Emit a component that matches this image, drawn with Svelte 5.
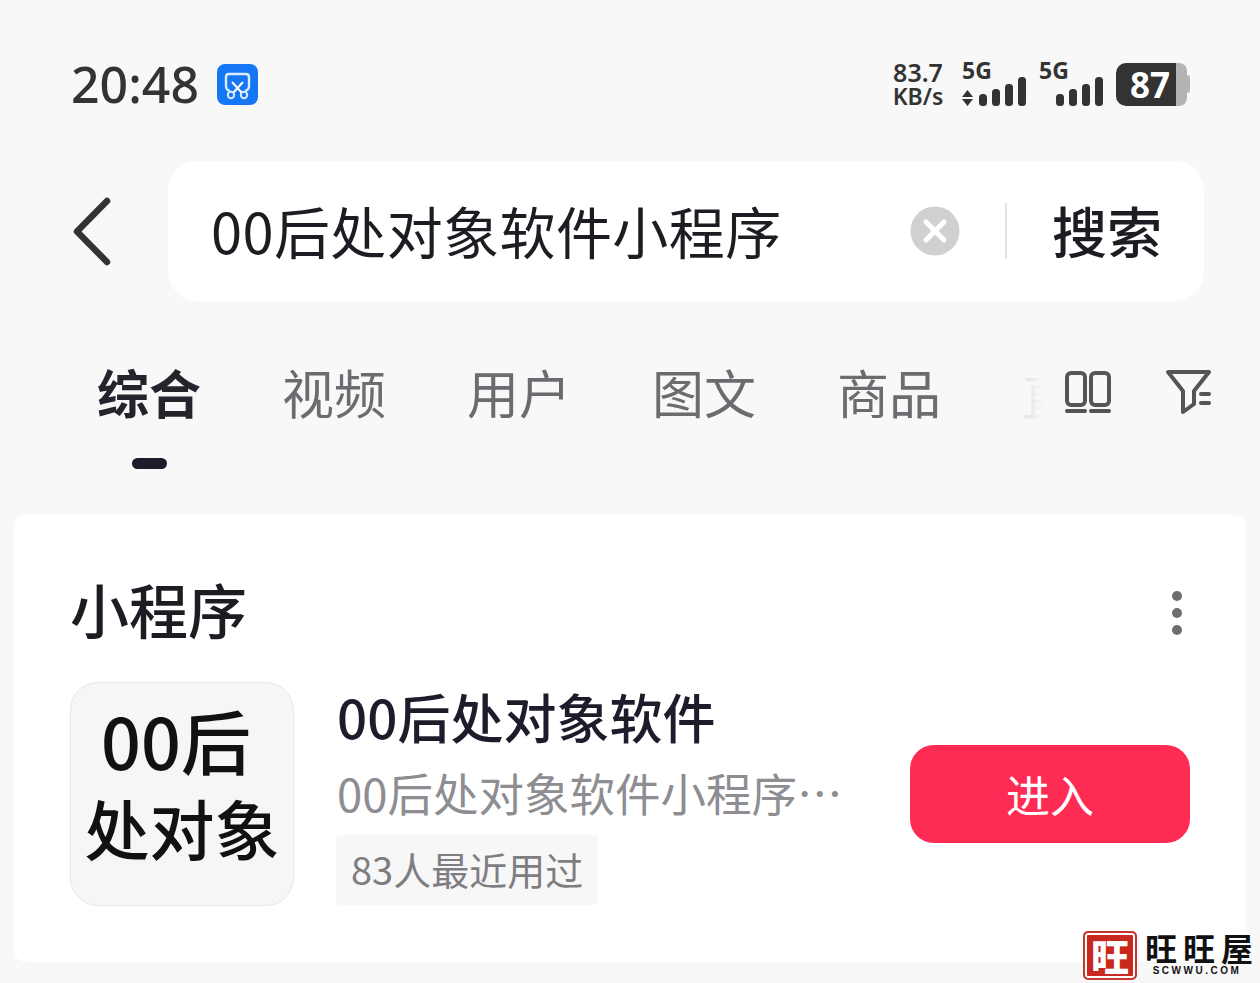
<script>
  const tabs = ["视频", "用户", "图文", "商品"];
</script>

<div class="page">
  <div class="status">
    <div class="left">
      <span class="time">20:48</span>
      <span class="shot">
        <svg width="41" height="41" viewBox="0 0 41 41">
          <rect width="41" height="41" rx="8" fill="#1677f5" />
          <path d="M13 27 Q9 26 9 22 V13 Q9 10 12 10 H29 Q32 10 32 13 V22 Q32 26 28 27" fill="none" stroke="#dcebff" stroke-width="2.4" />
          <path d="M15 18 L25 29 M26 18 L16 29" stroke="#fff" stroke-width="2" fill="none" />
          <circle cx="14" cy="31" r="3.2" fill="none" stroke="#dcebff" stroke-width="2" />
          <circle cx="27" cy="31" r="3.2" fill="none" stroke="#dcebff" stroke-width="2" />
        </svg>
      </span>
    </div>
    <div class="right">
      <div class="speed"><span>83.7</span><span class="unit">KB/s</span></div>
      <div class="sim first">
        <span class="gen">5G</span>
        <svg width="65" height="30" viewBox="0 0 65 30">
          <path d="M0 20 L5.500 13 L11 20 Z M0 22 H11 L5.500 29 Z" fill="#333" />
          <rect x="17" y="17" width="8" height="12" rx="3.500" fill="#333" />
          <rect x="30" y="12" width="8" height="17" rx="3.500" fill="#333" />
          <rect x="43" y="7" width="8" height="22" rx="3.500" fill="#333" />
          <rect x="56" y="0" width="8" height="29" rx="3.500" fill="#333" />
        </svg>
      </div>
      <div class="sim second">
        <span class="gen">5G</span>
        <svg width="48" height="30" viewBox="0 0 48 30">
          <rect x="0" y="17" width="8" height="12" rx="3.500" fill="#333" />
          <rect x="13" y="12" width="8" height="17" rx="3.500" fill="#333" />
          <rect x="26" y="7" width="8" height="22" rx="3.500" fill="#333" />
          <rect x="39" y="0" width="8" height="29" rx="3.500" fill="#333" />
        </svg>
      </div>
      <div class="battery">
        <span class="level">87</span>
        <span class="rest"></span>
        <span class="nub"></span>
      </div>
    </div>
  </div>

  <div class="search-row">
    <svg class="back" width="39" height="69" viewBox="0 0 39 69">
      <path d="M34 4 L4 34.500 L34 65" fill="none" stroke="#333" stroke-width="6.500" stroke-linecap="round" stroke-linejoin="round" />
    </svg>
    <div class="search">
      <span class="query">00后处对象软件小程序</span>
      <svg class="clear" width="50" height="50" viewBox="0 0 50 50">
        <circle cx="25" cy="25" r="24.500" fill="#d0d0d2" />
        <path d="M16 16 L34 34 M34 16 L16 34" stroke="#fff" stroke-width="5" stroke-linecap="round" />
      </svg>
      <span class="divider"></span>
      <span class="go">搜索</span>
    </div>
  </div>

  <div class="tabs">
    <div class="tab active">
      <span>综合</span>
      <i></i>
    </div>
    {#each tabs as t}
      <div class="tab"><span>{t}</span></div>
    {/each}
    <div class="fade">直</div>
    <svg class="cols" width="46" height="42" viewBox="0 0 46 42">
      <rect x="2" y="2" width="18" height="32" rx="4" fill="none" stroke="#555" stroke-width="4" />
      <rect x="26" y="2" width="18" height="32" rx="4" fill="none" stroke="#555" stroke-width="4" />
      <path d="M2 40 H20 M26 40 H44" stroke="#555" stroke-width="4" stroke-linecap="round" />
    </svg>
    <svg class="filter" width="48" height="48" viewBox="0 0 48 48">
      <path d="M3 3 H44 L29 22 V35 L18 43 V22 Z" fill="none" stroke="#555" stroke-width="4" stroke-linejoin="round" />
      <path d="M36 25 H44 M36 34 H44" stroke="#555" stroke-width="4" stroke-linecap="round" />
    </svg>
  </div>

  <div class="card">
    <div class="card-head">
      <span class="title">小程序</span>
      <div class="more"><i></i><i></i><i></i></div>
    </div>
    <div class="item">
      <div class="logo">
        <span class="l1">00后</span>
        <span class="l2">处对象</span>
      </div>
      <div class="info">
        <div class="name">00后处对象软件</div>
        <div class="desc">00后处对象软件小程序…</div>
        <div class="tag">83人最近用过</div>
      </div>
      <button class="enter">进入</button>
    </div>
  </div>

  <div class="mark">
    <span class="seal">旺</span>
    <div class="mark-text">
      <span class="cn">旺旺屋</span>
      <span class="en">SCWWU.COM</span>
    </div>
  </div>
</div>

<style>
  :global(body) {
    margin: 0;
    background: #f8f8f9;
  }
  .page {
    position: relative;
    height: 983px;
    overflow: hidden;
    background: #f8f8f9;
    font-family: "Noto Sans CJK SC", "Noto Sans", sans-serif;
  }
  .status {
    display: flex;
    justify-content: space-between;
    align-items: center;
    height: 60px;
    padding: 54px 70px 0 71px;
  }
  .left {
    display: flex;
    align-items: center;
    gap: 18px;
  }
  .time {
    font-family: "Noto Sans", sans-serif;
    font-size: 50px;
    font-weight: 500;
    color: #333;
    line-height: 60px;
  }
  .shot {
    display: flex;
  }
  .right {
    display: flex;
    align-items: center;
    color: #333;
    font-family: "Noto Sans", sans-serif;
    font-weight: 700;
  }
  .speed {
    display: flex;
    flex-direction: column;
    font-size: 25px;
    line-height: 24px;
    font-weight: 600;
    width: 50px;
    align-items: center;
    margin-right: 19px;
  }
  .unit {
    font-size: 23px;
  }
  .sim {
    position: relative;
    height: 46px;
    display: flex;
    align-items: flex-end;
  }
  .second {
    margin-left: 12px;
    padding-left: 17px;
    margin-right: 12px;
  }
  .gen {
    position: absolute;
    left: 0;
    top: -3px;
    font-size: 23px;
    line-height: 24px;
  }
  .battery {
    display: flex;
    align-items: center;
    height: 43px;
    width: 74px;
  }
  .level {
    width: 60px;
    height: 43px;
    box-sizing: border-box;
    padding-left: 8px;
    background: #333;
    border-radius: 10px 0 0 10px;
    color: #fff;
    font-size: 35px;
    line-height: 43px;
    text-align: center;
  }
  .rest {
    width: 11px;
    height: 43px;
    background: #b4b4b4;
    border-radius: 0 8px 8px 0;
  }
  .nub {
    width: 3px;
    height: 18px;
    background: #b4b4b4;
    border-radius: 0 3px 3px 0;
  }
  .search-row {
    display: flex;
    align-items: center;
    margin-top: 47px;
    padding: 0 56px 0 73px;
  }
  .back {
    margin-right: 56px;
  }
  .search {
    flex: 1;
    height: 140px;
    display: flex;
    align-items: center;
    background: #fff;
    border-radius: 30px;
    padding-left: 43px;
    color: #1c1c22;
  }
  .query {
    flex: 1;
    font-size: 56px;
    letter-spacing: 0.4px;
    line-height: 137px;
    height: 140px;
  }
  .clear {
    margin-right: 45px;
  }
  .divider {
    width: 2px;
    height: 56px;
    background: #e3e3e3;
    margin-right: 45px;
  }
  .go {
    font-size: 55px;
    font-weight: 500;
    margin-right: 44px;
    width: 108px;
    line-height: 137px;
    height: 140px;
    white-space: nowrap;
  }
  .tabs {
    position: relative;
    display: flex;
    align-items: flex-start;
    margin-top: 60px;
    padding-left: 97px;
    height: 154px;
    gap: 81px;
  }
  .tab {
    display: flex;
    flex-direction: column;
    align-items: center;
    font-size: 52px;
    line-height: 62px;
    color: #6b6b70;
    width: 104px;
    white-space: nowrap;
  }
  .active {
    color: #24242c;
    font-weight: 700;
  }
  .active i {
    display: block;
    width: 35px;
    height: 11px;
    margin-top: 35px;
    border-radius: 6px;
    background: #1c1c2b;
  }
  .fade {
    position: absolute;
    left: 1022px;
    top: 2px;
    width: 40px;
    overflow: hidden;
    font-size: 50px;
    line-height: 62px;
    color: #d8d8da;
    white-space: nowrap;
    mask-image: linear-gradient(to right, rgba(0, 0, 0, 0.7), transparent 55%);
  }
  .cols {
    position: absolute;
    left: 1065px;
    top: 10px;
  }
  .filter {
    position: absolute;
    left: 1165px;
    top: 8px;
  }
  .card {
    margin: 0 14px;
    height: 447px;
    box-sizing: border-box;
    background: #fff;
    border-radius: 12px;
    padding: 55px 56px 0;
  }
  .card-head {
    display: flex;
    justify-content: space-between;
    align-items: center;
    height: 78px;
  }
  .title {
    font-size: 59px;
    font-weight: 500;
    color: #1c1c22;
    line-height: 78px;
  }
  .more {
    display: flex;
    flex-direction: column;
    gap: 7px;
    margin: 8px 8px 0 0;
  }
  .more i {
    display: block;
    width: 10px;
    height: 10px;
    border-radius: 50%;
    background: #6e6e72;
  }
  .item {
    display: flex;
    align-items: center;
    margin-top: 34px;
    height: 224px;
  }
  .logo {
    width: 224px;
    height: 224px;
    box-sizing: border-box;
    border: 1px solid #e8e8e8;
    border-radius: 28px;
    background: #f6f6f6;
    color: #111;
    font-weight: 500;
    display: flex;
    flex-direction: column;
    align-items: center;
    margin-right: 43px;
    flex: none;
  }
  .l1 {
    font-size: 70px;
    line-height: 84px;
    margin-top: 15px;
    margin-right: 12px;
  }
  .l2 {
    font-size: 65px;
    line-height: 84px;
    margin-top: 3px;
  }
  .info {
    flex: 1;
    min-width: 0;
  }
  .name {
    font-size: 53px;
    line-height: 64px;
    margin-top: 1px;
    color: #1c1c2b;
    font-weight: 500;
  }
  .desc {
    font-size: 45.5px;
    line-height: 62px;
    margin-top: 13px;
    color: #8d8d92;
    white-space: nowrap;
  }
  .tag {
    display: inline-block;
    margin-top: 12px;
    margin-left: -1px;
    padding: 0 15px 3px;
    font-size: 38px;
    line-height: 67px;
    background: #f7f7f7;
    color: #7e7e82;
    border-radius: 4px;
  }
  .enter {
    width: 280px;
    height: 98px;
    flex: none;
    border: 0;
    border-radius: 24px;
    background: #fe2c55;
    color: #fff;
    font-family: inherit;
    font-size: 44px;
  }
  .mark {
    position: absolute;
    left: 1083px;
    top: 931px;
    display: flex;
    gap: 8px;
  }
  .seal {
    width: 54px;
    height: 49px;
    box-sizing: border-box;
    border: 2px solid #c8372c;
    box-shadow: inset 0 0 0 2px #fff;
    border-radius: 5px;
    background: #c8281e;
    color: #fff;
    font-size: 38px;
    font-weight: 900;
    line-height: 44px;
    text-align: center;
  }
  .mark-text {
    display: flex;
    flex-direction: column;
    align-items: center;
    color: #111;
  }
  .cn {
    font-size: 32px;
    font-weight: 700;
    line-height: 32px;
    letter-spacing: 6px;
    white-space: nowrap;
  }
  .en {
    font-family: "Liberation Sans", sans-serif;
    font-size: 10px;
    font-weight: 700;
    letter-spacing: 2.500px;
    line-height: 14px;
    margin: 1px 10px 0 0;
  }
</style>
